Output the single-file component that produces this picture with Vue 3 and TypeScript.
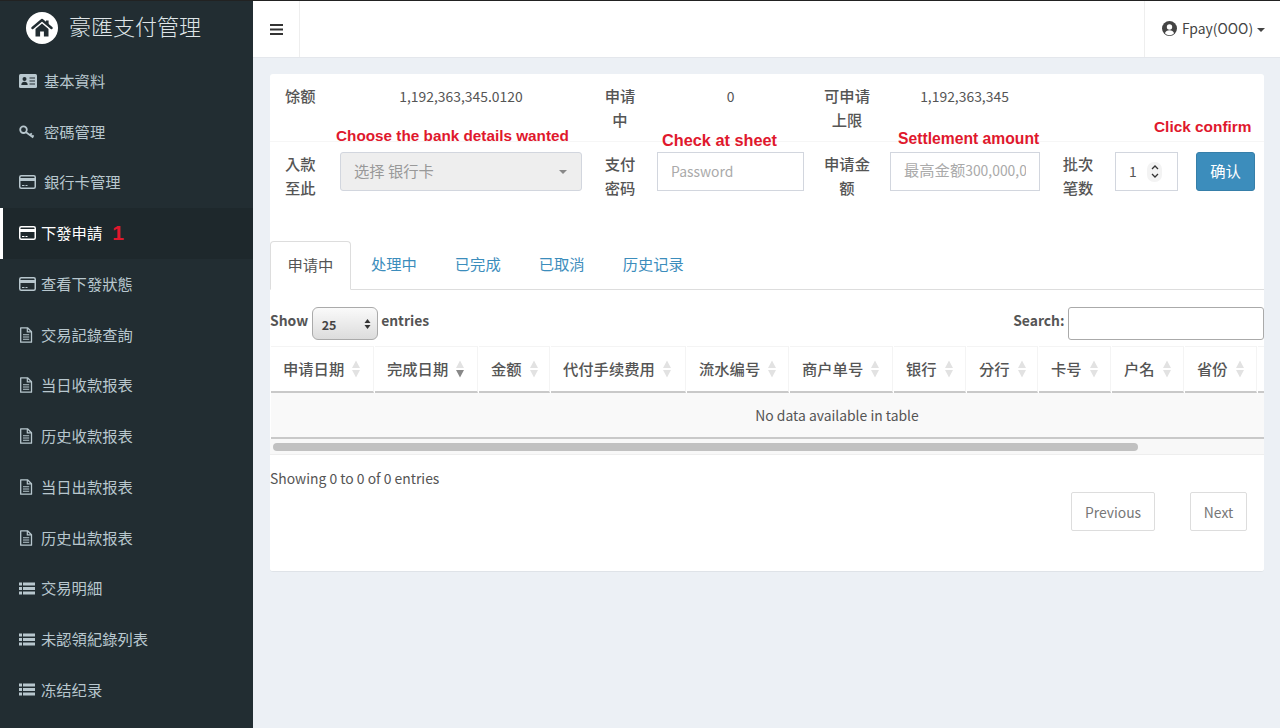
<script setup lang="ts">
type IconName = 'idcard' | 'key' | 'card' | 'file' | 'list'
interface NavItem { label: string; icon: IconName; wide?: boolean; active?: boolean; mark?: string }

const navItems: NavItem[] = [
  { label: '基本資料', icon: 'idcard', wide: true },
  { label: '密碼管理', icon: 'key', wide: true },
  { label: '銀行卡管理', icon: 'card', wide: true },
  { label: '下發申請', icon: 'card', active: true, mark: '1' },
  { label: '查看下發狀態', icon: 'card' },
  { label: '交易記錄查詢', icon: 'file' },
  { label: '当日收款报表', icon: 'file' },
  { label: '历史收款报表', icon: 'file' },
  { label: '当日出款报表', icon: 'file' },
  { label: '历史出款报表', icon: 'file' },
  { label: '交易明細', icon: 'list' },
  { label: '未認領紀錄列表', icon: 'list' },
  { label: '冻结纪录', icon: 'list' },
]
const tabs = ['申请中', '处理中', '已完成', '已取消', '历史记录']
const columns = [
  { label: '申请日期', width: 103 },
  { label: '完成日期', width: 103, sorted: true },
  { label: '金额', width: 71 },
  { label: '代付手续费用', width: 135 },
  { label: '流水编号', width: 102 },
  { label: '商户单号', width: 103 },
  { label: '银行', width: 72 },
  { label: '分行', width: 71 },
  { label: '卡号', width: 72 },
  { label: '户名', width: 72 },
  { label: '省份', width: 72 },
  { label: '', width: 145 },
]
</script>

<template>
  <div class="shell">
    <aside class="sidebar">
      <div class="brand">
        <span class="brand-logo">
          <svg width="22" height="20" viewBox="0 0 22 20">
            <path d="M1.5 10 11 2l9.500 8" fill="none" stroke="#222d32" stroke-width="2.400" stroke-linecap="round" stroke-linejoin="round" />
            <path d="M15 2.500h2.600v4.800L15 5.200z" fill="#222d32" />
            <path d="M4.500 11 11 5.600l6.500 5.400v7.500h-4.600v-5h-3.800v5H4.500z" fill="#222d32" />
          </svg>
        </span>
        <span class="brand-name">豪匯支付管理</span>
      </div>
      <nav class="nav">
        <div v-for="item in navItems" :key="item.label" class="nav-item" :class="{ active: item.active }">
          <span class="nav-icon" :class="{ wide: item.wide }">
            <svg v-if="item.icon === 'idcard'" width="18" height="14" viewBox="0 0 18 14">
              <rect width="18" height="14" rx="1.500" fill="currentColor" />
              <circle cx="5.500" cy="5" r="2" fill="#222d32" />
              <path d="M2.300 11c0-2.200 1.400-3.300 3.200-3.300s3.200 1.100 3.200 3.300z" fill="#222d32" />
              <path d="M10.500 4h5.500M10.500 7h5.500M10.500 10h5.500" stroke="#222d32" stroke-width="1.200" />
            </svg>
            <svg v-else-if="item.icon === 'key'" width="16" height="14" viewBox="0 0 16 14">
              <circle cx="4.500" cy="4.700" r="3.300" fill="none" stroke="currentColor" stroke-width="1.800" />
              <path d="M7 7.200l7.300 5.300M11 10l1.800-1.600M13.200 11.600l1.400-1.300" fill="none" stroke="currentColor" stroke-width="1.800" />
            </svg>
            <svg v-else-if="item.icon === 'card'" width="17" height="14" viewBox="0 0 17 14">
              <rect x=".75" y=".75" width="15.500" height="12.500" rx="1.500" fill="none" stroke="currentColor" stroke-width="1.500" />
              <rect x="1" y="3" width="15" height="3" fill="currentColor" />
              <path d="M3 10.500h2.500M6.500 10.500h2" stroke="currentColor" stroke-width="1" />
            </svg>
            <svg v-else-if="item.icon === 'file'" width="14" height="16" viewBox="0 0 14 16">
              <path d="M1.700.8h6.800l4 4v10.400H1.700z" fill="none" stroke="currentColor" stroke-width="1.300" stroke-linejoin="round" />
              <path d="M8.300 1v3.900h4" fill="none" stroke="currentColor" stroke-width="1.200" />
              <path d="M4 7.700h6.200M4 10h6.200M4 12.300h6.200" stroke="currentColor" stroke-width="1.100" />
            </svg>
            <svg v-else width="16" height="13" viewBox="0 0 16 13">
              <path d="M0 2h3M4 2h12M0 6.500h3M4 6.500h12M0 11h3M4 11h12" stroke="currentColor" stroke-width="3" />
            </svg>
          </span>
          <span class="nav-text">{{ item.label }}</span>
          <span v-if="item.mark" class="nav-mark">{{ item.mark }}</span>
        </div>
      </nav>
    </aside>

    <div class="content">
      <header class="topbar">
        <div class="toggle">
          <svg width="13" height="11" viewBox="0 0 13 11"><path d="M0 1h13M0 5.500h13M0 10h13" stroke="#333" stroke-width="2" /></svg>
        </div>
        <div class="user">
          <svg width="15" height="15" viewBox="0 0 15 15">
            <circle cx="7.500" cy="7.500" r="7.500" fill="#444" />
            <circle cx="7.500" cy="6" r="2.700" fill="#fff" />
            <path d="M2.900 12.200c.6-2 2.400-3 4.600-3s4 1 4.600 3a6 6 0 0 1-9.200 0z" fill="#fff" />
          </svg>
          <span class="user-name">Fpay(OOO)</span>
          <i class="user-caret"></i>
        </div>
      </header>

      <main class="main">
        <section class="card">
          <div class="form-row summary">
            <div class="label first">馀额</div>
            <div class="value first-value">1,192,363,345.0120</div>
            <div class="label">申请中</div>
            <div class="value zero-value">0</div>
            <div class="label">可申请上限</div>
            <div class="value">1,192,363,345</div>
          </div>
          <div class="form-row entry">
            <div class="label first">入款至此</div>
            <div class="control">
              <div class="select-box"><span class="select-text">选择 银行卡</span><i class="select-caret"></i></div>
            </div>
            <div class="label">支付密码</div>
            <div class="control"><input class="field latin" type="text" placeholder="Password" /></div>
            <div class="label">申请金额</div>
            <div class="control">
              <div class="field fake-field"><div class="fake-clip">最高金额<span class="latin">300,000,000</span></div></div>
            </div>
            <div class="label">批次笔数</div>
            <div class="control">
              <div class="stepper">
                <span class="stepper-value">1</span>
                <span class="spin">
                  <svg width="8" height="15" viewBox="0 0 8 15"><path d="M1 5l3-3 3 3M1 10l3 3 3-3" fill="none" stroke="#333" stroke-width="1.300" /></svg>
                </span>
              </div>
            </div>
            <button class="confirm" type="button">确认</button>
          </div>

          <span class="note note-bank">Choose the bank details wanted</span>
          <span class="note note-sheet">Check at sheet</span>
          <span class="note note-amount">Settlement amount</span>
          <span class="note note-confirm">Click confirm</span>

          <ul class="tabs">
            <li v-for="(tab, i) in tabs" :key="tab" class="tab" :class="{ active: i === 0 }">{{ tab }}</li>
          </ul>

          <div class="table-tools">
            <div class="tool">
              <b>Show</b>
              <div class="length">
                <span>25</span>
                <svg width="7" height="12" viewBox="0 0 7 12"><path d="M3.500 1 6.500 5h-6zM3.500 11 .5 7h6z" fill="#333" /></svg>
              </div>
              <b>entries</b>
            </div>
            <div class="tool">
              <b>Search:</b>
              <input class="search" type="text" />
            </div>
          </div>

          <div class="table-wrap">
            <table class="table">
              <colgroup><col v-for="(c, i) in columns" :key="i" :style="{ width: c.width + 'px' }" /></colgroup>
              <thead>
                <tr>
                  <th v-for="(c, i) in columns" :key="i">
                    <span class="th-inner">
                      {{ c.label }}
                      <svg v-if="c.label" class="sort" width="10" height="18" viewBox="0 0 10 18">
                        <path d="M5 .5 9 8H1z" fill="#e2e2e2" />
                        <path d="M5 17.500 1 10h8z" :fill="c.sorted ? '#888' : '#e2e2e2'" />
                      </svg>
                    </span>
                  </th>
                </tr>
              </thead>
              <tbody>
                <tr><td :colspan="columns.length">No data available in table</td></tr>
              </tbody>
            </table>
          </div>
          <div class="scroll"><div class="thumb"></div></div>

          <div class="info">Showing 0 to 0 of 0 entries</div>
          <div class="pager">
            <span class="page-btn prev">Previous</span>
            <span class="page-btn next">Next</span>
          </div>
        </section>
      </main>
    </div>
  </div>
</template>

<style>
html, body { margin: 0; background: #ecf0f5; }
</style>

<style scoped>
.shell {
  display: flex;
  height: 728px;
  overflow: hidden;
  font-family: "Noto Sans CJK TC", "Noto Sans CJK SC", "Noto Sans", sans-serif;
  font-size: 15.300px;
  color: #555;
  border-top: 1px solid #222;
  box-sizing: border-box;
}
.latin { font-size: 13.900px; }
.sidebar { width: 253px; flex: none; background: #222d32; color: #b8c7ce; }
.brand { height: 54.500px; display: flex; align-items: center; padding-left: 26px; box-sizing: border-box; }
.brand-logo {
  width: 32px; height: 32px; border-radius: 50%; background: #fff;
  display: flex; align-items: center; justify-content: center;
}
.brand-name { margin-left: 11px; padding-bottom: 6px; font-size: 22px; color: #dfe5e8; font-weight: 300; }
.nav-item {
  height: 50.750px; display: flex; align-items: center; padding-left: 19px;
  box-sizing: border-box; position: relative;
}
.nav-item.active { background: #1e282c; color: #fff; box-shadow: inset 3px 0 0 #fff; }
.nav-icon { width: 22px; flex: none; display: flex; align-items: center; }
.nav-icon.wide { width: 25px; }
.nav-text { padding-bottom: 2px; }
.nav-mark {
  margin-left: 10px; font: bold 21px "Liberation Sans", sans-serif; color: #e0182d;
}

.content { flex: 1; min-width: 0; display: flex; flex-direction: column; }
.topbar {
  height: 57px; flex: none; background: #fff; display: flex; justify-content: space-between;
  border-bottom: 1px solid #e4e7ec; box-sizing: border-box;
}
.toggle {
  width: 47px; display: flex; align-items: center; padding-left: 17px; box-sizing: border-box;
  border-right: 1px solid #eee;
}
.user {
  width: 136px; display: flex; align-items: center; padding-left: 17px; box-sizing: border-box;
  border-left: 1px solid #eee; color: #444;
}
.user svg { margin-top: -2px; }
.user-name { margin-left: 5px; font-size: 13.900px; padding-bottom: 3px; }
.user-caret {
  margin-left: 4px; margin-top: 1px; border: 4px solid transparent; border-top-color: #444; border-bottom: 0;
}

.main { padding: 16px 16px 0 17px; }
.card {
  position: relative; background: #fff; height: 498px; border-radius: 3px;
  border-bottom: 1px solid #dfe3e8; box-sizing: border-box; padding-top: 10px;
}
.form-row { display: grid; grid-template-columns: 70px 252px 56px 167px 64px 171px 56px 81px 77px; line-height: 24px; }
.summary { height: 58px; border-bottom: 1px solid #f6f6f6; box-sizing: border-box; }
.entry { padding-top: 10px; height: 67px; box-sizing: border-box; }
.label { text-align: center; font-weight: 500; padding: 0 8px; box-sizing: border-box; margin-top: -1px; }
.label.first { text-align: left; padding: 0 24px 0 15px; }
.value { text-align: center; font-size: 13.900px; }
.first-value { padding-right: 10px; }
.zero-value { padding-right: 2px; }
.control { padding-right: 10px; box-sizing: border-box; }
.control:nth-child(4) { padding-left: 9px; padding-right: 11px; }
.control:nth-child(6) { padding-left: 11px; padding-right: 10px; }
.control:nth-child(8) { padding-left: 9px; padding-right: 9px; }
.select-box {
  height: 39px; background: #eee; border: 1px solid #d2d6de; border-radius: 3px; box-sizing: border-box;
  display: flex; align-items: center; justify-content: space-between; padding: 0 14px 0 13px; color: #999; width: 242px;
}
.select-text { padding-bottom: 4px; }
.select-caret { border: 4.500px solid transparent; border-top-color: #888; border-bottom: 0; }
.field {
  width: 100%; height: 39px; border: 1px solid #d2d6de; box-sizing: border-box; padding: 0 13px 2px;
  font-family: inherit; color: #aaa; outline: none; background: #fff;
}
.field::placeholder { color: #aaa; opacity: 1; }
.fake-field {
  display: flex; align-items: center; padding-bottom: 4px; font-size: 15.300px;
}
.fake-clip { width: 100%; overflow: hidden; white-space: nowrap; }
.stepper {
  height: 39px; width: 63px; border: 1px solid #d2d6de; box-sizing: border-box; display: flex;
  align-items: center; justify-content: space-between; padding: 0 15px 0 13px; font-size: 13.900px;
}
.stepper-value { padding-bottom: 2px; }
.spin {
  display: flex; align-items: center; justify-content: center; width: 15px; height: 20px;
  border-radius: 7px; background: #f3f3f3;
}
.confirm {
  width: 59px; height: 39px; margin-left: 9px; border: 1px solid #367fa9; border-radius: 3px; background: #3c8dbc;
  color: #fff; font: inherit; padding: 0 0 4px;
}
.note { position: absolute; font: bold 15.300px/18px "Liberation Sans", sans-serif; color: #e0182d; white-space: nowrap; }
.note-bank { left: 66px; top: 53px; }
.note-sheet { left: 392px; top: 57px; font-size: 16.300px; }
.note-amount { left: 628px; top: 56px; font-size: 15.700px; }
.note-confirm { left: 884px; top: 44px; font-size: 15.400px; }

.tabs {
  list-style: none; margin: 32px 0 0; padding: 0; display: flex; height: 49px; box-sizing: border-box;
  border-bottom: 1px solid #ddd;
}
.tab { padding: 0 18px; margin-right: 2px; line-height: 45px; color: #3c8dbc; height: 48px; }
.tab.active {
  color: #555; background: #fff; border: 1px solid #ddd; border-bottom-color: #fff; border-radius: 4px 4px 0 0;
  height: 49px; box-sizing: border-box; padding: 0 16.500px; line-height: 44px;
}
.table-tools {
  display: flex; justify-content: space-between; align-items: center; margin-top: 16px; height: 34px;
}
.tool { display: flex; align-items: center; gap: 3.500px; }
.tool b { font-weight: 700; font-size: 13.900px; margin-top: -6px; }
.length {
  width: 66px; height: 33px; box-sizing: border-box; border: 1.500px solid #aaa; border-radius: 6px;
  background: linear-gradient(#fafafa, #dcdcdc); display: flex; align-items: center; justify-content: space-between;
  padding: 2px 6px 0 9px; font-size: 12.500px; font-weight: 700; color: #444;
}
.search {
  width: 196px; height: 33px; box-sizing: border-box; border: 1px solid #aaa; border-radius: 3px;
  background: #fff; outline: none; padding: 0 6px; font: inherit;
}
.table-wrap { margin-top: 6px; overflow: hidden; }
.table { table-layout: fixed; width: 1133px; border-collapse: separate; border-spacing: 1px 0; }
.table th {
  height: 47px; padding: 0 0 0 12px; box-sizing: border-box; border-top: 1px solid #f4f4f4;
  border-right: 1px solid #f4f4f4; border-bottom: 2px solid #c9c9c9; font-weight: 500; text-align: left; white-space: nowrap; overflow: hidden;
}
.th-inner { display: flex; align-items: center; gap: 7px; margin-top: -3px; }
.sort { margin-top: 3px; }
.table td {
  height: 46px; padding: 0; text-align: center; background: #f9f9f9; border-bottom: 2px solid #c9c9c9;
  box-sizing: border-box; font-size: 13.900px;
}
.scroll { height: 16px; background: #f8f8f8; border-bottom: 1px solid #eee; box-sizing: border-box; display: flex; align-items: center; padding-left: 3px; }
.thumb { width: 865px; height: 8px; border-radius: 4px; background: #c1c1c1; }
.info { margin-top: 12px; line-height: 22px; font-size: 13.900px; }
.pager { display: flex; justify-content: flex-end; margin-top: 3px; padding-right: 17px; gap: 35px; }
.page-btn {
  height: 39px; line-height: 38px; box-sizing: border-box; border: 1px solid #ddd; border-radius: 2px; color: #777;
  text-align: center; font-size: 13.900px;
}
.prev { width: 84px; }
.next { width: 57px; }
</style>
